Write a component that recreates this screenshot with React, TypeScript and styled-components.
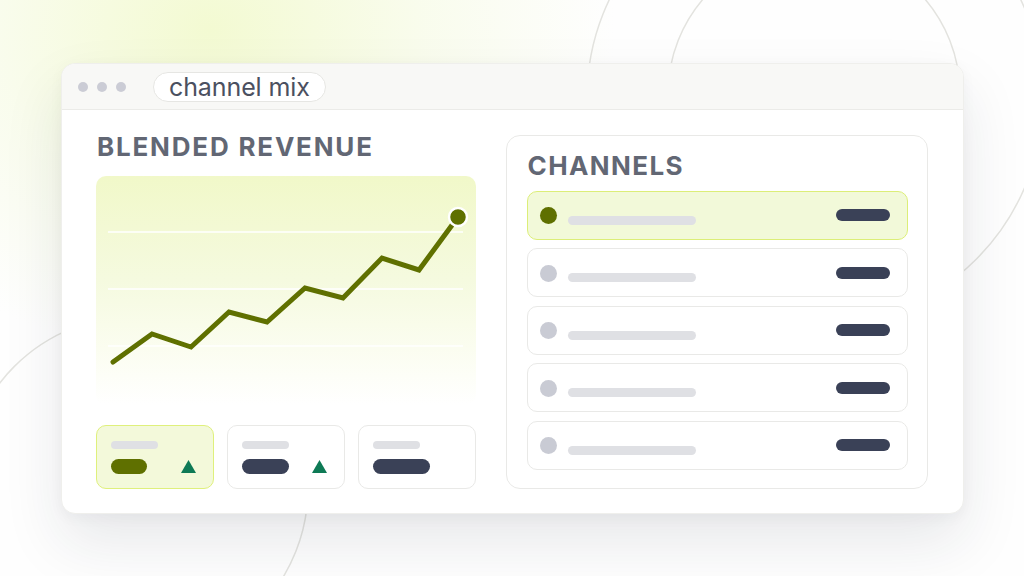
import React from "react";
import styled, { createGlobalStyle } from "styled-components";

const GlobalStyle = createGlobalStyle`
  html, body {
    margin: 0;
    padding: 0;
    background: #fefefe;
  }
  body {
    font-family: Inter, "Noto Sans", "Liberation Sans", sans-serif;
  }
`;

const OLIVE = "#5f7000";
const INK = "#3a4157";
const MIST = "#dfe0e4";

const channels = [true, false, false, false, false];
const stats = [
  { pill: 36, active: true, up: true },
  { pill: 47, active: false, up: true },
  { pill: 57, active: false, up: false }
];

// chart coordinates inside the 380x229 plot
const points = [
  [17, 186],
  [56, 158],
  [95, 171],
  [133, 136],
  [171, 146],
  [209, 112],
  [247, 122],
  [286, 82],
  [323, 94],
  [362, 41]
];

const App: React.FC = () => {
  const linePath = points.map(([x, y], i) => `${i ? "L" : "M"}${x} ${y}`).join(" ");
  const [endX, endY] = points[points.length - 1];

  return (
    <Page>
      <GlobalStyle />
      <Backdrop viewBox="0 0 1024 576" aria-hidden>
        <circle cx="815" cy="98" r="228" />
        <circle cx="814" cy="94" r="146" />
        <circle cx="136" cy="488" r="172" />
      </Backdrop>

      <Window>
        <TitleBar>
          <Dots>
            <Dot />
            <Dot />
            <Dot />
          </Dots>
          <Tab>channel mix</Tab>
        </TitleBar>

        <Content>
          <LeftColumn>
            <SectionTitle>BLENDED REVENUE</SectionTitle>
            <Chart>
              <svg width="380" height="229" viewBox="0 0 380 229">
                {[56, 113, 170].map(y => (
                  <line key={y} x1="12" x2="367" y1={y} y2={y} stroke="#ffffff" strokeWidth="1.5" />
                ))}
                <path
                  d={linePath}
                  fill="none"
                  stroke={OLIVE}
                  strokeWidth="5"
                  strokeLinecap="round"
                  strokeLinejoin="miter"
                />
                <circle cx={endX} cy={endY} r="9" fill={OLIVE} stroke="#ffffff" strokeWidth="2.5" />
              </svg>
            </Chart>
            <StatRow>
              {stats.map((s, i) => (
                <StatCard key={i} $active={s.active}>
                  <StatLabel />
                  <StatValueRow>
                    <StatPill $width={s.pill} $active={s.active} />
                    {s.up && (
                      <UpArrow viewBox="0 0 15 13">
                        <polygon points="7.5,0 15,13 0,13" />
                      </UpArrow>
                    )}
                  </StatValueRow>
                </StatCard>
              ))}
            </StatRow>
          </LeftColumn>

          <ChannelPanel>
            <PanelTitle>CHANNELS</PanelTitle>
            <ChannelList>
              {channels.map((active, i) => (
                <ChannelRow key={i} $active={active}>
                  <ChannelDot $active={active} />
                  <ChannelName />
                  <ChannelValue />
                </ChannelRow>
              ))}
            </ChannelList>
          </ChannelPanel>
        </Content>
      </Window>
    </Page>
  );
};

const Page = styled.div`
  position: relative;
  width: 1024px;
  height: 576px;
  overflow: hidden;
  box-sizing: border-box;
  padding: 63px 0 0 61px;
  background:
    radial-gradient(ellipse 540px 440px at 210px 30px, #f3fad2 0%, rgba(246, 251, 226, 0.6) 40%, rgba(255, 255, 255, 0) 75%),
    #fefefe;
`;

const Backdrop = styled.svg`
  position: absolute;
  inset: 0;
  width: 1024px;
  height: 576px;
  z-index: 0;

  circle {
    fill: none;
    stroke: #e3e3df;
    stroke-width: 1.5;
  }
`;

const Window = styled.div`
  position: relative;
  z-index: 1;
  width: 903px;
  height: 451px;
  box-sizing: border-box;
  background: #ffffff;
  border: 1px solid #efefec;
  border-radius: 14px;
  overflow: hidden;
  box-shadow: 0 28px 60px rgba(30, 36, 56, 0.1), 0 4px 14px rgba(30, 36, 56, 0.04);
  display: flex;
  flex-direction: column;
`;

const TitleBar = styled.div`
  height: 45px;
  flex-shrink: 0;
  display: flex;
  align-items: center;
  padding-left: 16px;
  background: #f8f8f6;
  border-bottom: 1px solid #ebebe8;
`;

const Dots = styled.div`
  display: flex;
  gap: 9px;
  margin-right: 27px;
`;

const Dot = styled.span`
  width: 10px;
  height: 10px;
  border-radius: 50%;
  background: #cbccd5;
`;

const Tab = styled.div`
  height: 30px;
  box-sizing: border-box;
  padding: 0 15px;
  display: flex;
  align-items: center;
  border: 1px solid #e6e6e3;
  border-radius: 15px;
  background: #ffffff;
  font-size: 25px;
  font-weight: 400;
  letter-spacing: -0.1px;
  color: #4b5060;
`;

const Content = styled.div`
  flex: 1;
  display: flex;
  gap: 30px;
  padding: 25px 35px 24px 34px;
`;

const LeftColumn = styled.div`
  width: 380px;
  display: flex;
  flex-direction: column;
`;

const SectionTitle = styled.div`
  font-size: 26px;
  line-height: 26px;
  font-weight: 700;
  letter-spacing: 1.8px;
  color: #626774;
  margin: -1.5px 0 16.5px 1px;
`;

const Chart = styled.div`
  height: 229px;
  border-radius: 10px;
  background: linear-gradient(180deg, #f1f8c9 0%, #f5fadf 45%, #fbfdf0 75%, #ffffff 100%);
  overflow: hidden;

  svg {
    display: block;
  }
`;

const StatRow = styled.div`
  margin-top: 20px;
  display: grid;
  grid-template-columns: repeat(3, 1fr);
  gap: 13px;
`;

const StatCard = styled.div<{ $active: boolean }>`
  height: 64px;
  box-sizing: border-box;
  padding: 14.5px 17px 0 13.5px;
  border-radius: 10px;
  border: 1.5px solid ${p => (p.$active ? "#dff07c" : "#e9e9e7")};
  background: ${p => (p.$active ? "#f3f9da" : "#ffffff")};
  display: flex;
  flex-direction: column;
  gap: 10px;
`;

const StatLabel = styled.span`
  width: 47px;
  height: 8px;
  border-radius: 4px;
  background: ${MIST};
`;

const StatValueRow = styled.div`
  display: flex;
  align-items: center;
`;

const StatPill = styled.span<{ $width: number; $active: boolean }>`
  width: ${p => p.$width}px;
  height: 15px;
  border-radius: 8px;
  background: ${p => (p.$active ? OLIVE : INK)};
`;

const UpArrow = styled.svg`
  width: 15px;
  height: 13px;
  margin-left: auto;
  fill: #0e7a55;
`;

const ChannelPanel = styled.div`
  flex: 1;
  box-sizing: border-box;
  border: 1.5px solid #e9e9e7;
  border-radius: 14px;
  padding: 17px 19.5px 0 19.5px;
  display: flex;
  flex-direction: column;
`;

const PanelTitle = styled.div`
  font-size: 26px;
  line-height: 26px;
  font-weight: 700;
  letter-spacing: 1.4px;
  color: #626774;
  margin: 0 0 11.5px 1px;
`;

const ChannelList = styled.div`
  display: flex;
  flex-direction: column;
  gap: 8.5px;
`;

const ChannelRow = styled.div<{ $active: boolean }>`
  height: 49px;
  box-sizing: border-box;
  display: flex;
  align-items: center;
  padding: 0 16.5px 0 12.5px;
  border-radius: 10px;
  border: 1.5px solid ${p => (p.$active ? "#dcee78" : "#e9e9e7")};
  background: ${p => (p.$active ? "#f2f9d9" : "#ffffff")};
`;

const ChannelDot = styled.span<{ $active: boolean }>`
  width: 17px;
  height: 17px;
  border-radius: 50%;
  background: ${p => (p.$active ? OLIVE : "#c9cbd4")};
  margin-top: 1px;
`;

const ChannelName = styled.span`
  width: 128px;
  height: 9px;
  border-radius: 5px;
  background: ${MIST};
  margin: 10px 0 0 11px;
`;

const ChannelValue = styled.span`
  width: 54px;
  height: 12px;
  border-radius: 6px;
  background: ${INK};
  margin-left: auto;
`;

export default App;
